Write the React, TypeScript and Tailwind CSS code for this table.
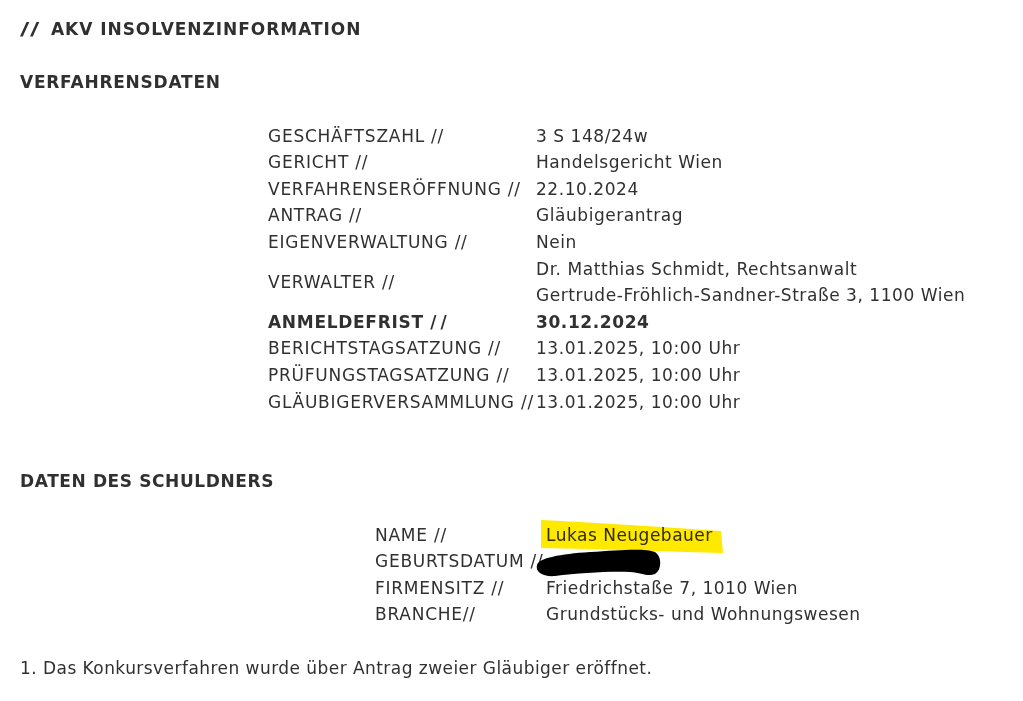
import React from "react";

const rows1: { label: React.ReactNode; key: string; value: React.ReactNode; bold?: boolean }[] = [
  { key: "a", label: "GESCHÄFTSZAHL //", value: "3 S 148/24w" },
  { key: "b", label: "GERICHT //", value: "Handelsgericht Wien" },
  { key: "c", label: "VERFAHRENSERÖFFNUNG //", value: "22.10.2024" },
  { key: "d", label: "ANTRAG //", value: "Gläubigerantrag" },
  { key: "e", label: "EIGENVERWALTUNG //", value: "Nein" },
  {
    key: "f",
    label: "VERWALTER //",
    value: (
      <>
        <div>Dr. Matthias Schmidt, Rechtsanwalt</div>
        <div>Gertrude-Fröhlich-Sandner-Straße 3, 1100 Wien</div>
      </>
    ),
  },
  {
    key: "g",
    label: (
      <>
        ANMELDEFRIST <span className="tracking-[4px]">//</span>
      </>
    ),
    value: "30.12.2024",
    bold: true,
  },
  { key: "h", label: "BERICHTSTAGSATZUNG //", value: "13.01.2025, 10:00 Uhr" },
  { key: "i", label: "PRÜFUNGSTAGSATZUNG //", value: "13.01.2025, 10:00 Uhr" },
  { key: "j", label: "GLÄUBIGERVERSAMMLUNG //", value: "13.01.2025, 10:00 Uhr" },
];

const rows2 = [
  { label: "NAME //", value: "Lukas Neugebauer" },
  { label: "GEBURTSDATUM //", value: "" },
  { label: "FIRMENSITZ //", value: "Friedrichstaße 7, 1010 Wien" },
  { label: "BRANCHE//", value: "Grundstücks- und Wohnungswesen" },
];

export default function App() {
  return (
    <div
      className="relative w-[1023px] h-[701px] overflow-hidden bg-white text-[#303030] text-[17px] leading-[26.6px] tracking-[0.6px] pl-[20px] pt-[15.7px]"
      style={{ fontFamily: '"DejaVu Sans", Verdana, sans-serif' }}
    >
      <h1 className="font-bold tracking-[0.95px] whitespace-nowrap">
        <span className="inline-block w-[31px]">
          <span className="inline-block origin-left scale-x-[1.5] tracking-[0.5px]">//</span>
        </span>
        AKV INSOLVENZINFORMATION
      </h1>
      <h2 className="font-bold tracking-[0.75px] mt-[26.4px]">VERFAHRENSDATEN</h2>
      <div className="mt-[27.4px] ml-[248px] grid grid-cols-[268px_auto] items-center">
        {rows1.map((r) => (
          <React.Fragment key={r.key}>
            <div
              className={
                r.bold
                  ? "font-bold whitespace-nowrap tracking-[0.7px]"
                  : "whitespace-nowrap tracking-[0.75px]"
              }
            >
              {r.label}
            </div>
            <div className={r.bold ? "font-bold whitespace-nowrap tracking-[0.6px]" : "whitespace-nowrap tracking-[0.55px]"}>
              {r.value}
            </div>
          </React.Fragment>
        ))}
      </div>
      <h2 className="font-bold tracking-[0.6px] mt-[52.4px]">DATEN DES SCHULDNERS</h2>
      <div className="mt-[27.4px] ml-[355px] grid grid-cols-[171px_auto] items-center">
        {rows2.map((r) => (
          <React.Fragment key={r.label}>
            <div className="whitespace-nowrap tracking-[0.75px]">{r.label}</div>
            <div className="whitespace-nowrap h-[26.6px] tracking-[0.5px]">{r.value}</div>
          </React.Fragment>
        ))}
      </div>
      <p className="mt-[26.6px] whitespace-nowrap tracking-[0.45px]">
        1. Das Konkursverfahren wurde über Antrag zweier Gläubiger eröffnet.
      </p>

      <svg className="absolute left-0 top-0 pointer-events-none mix-blend-multiply" width="1023" height="701">
        <path
          d="M541 520 C 600 523, 680 528, 721 531 L 723 553 C 680 552, 600 549, 541 548 Z"
          fill="#ffe900"
        />
      </svg>
      <svg className="absolute left-0 top-0 pointer-events-none" width="1023" height="701">
        <path
          d="M537 565 C 539 558, 560 554, 590 552 C 620 550, 645 548, 655 552 C 662 556, 662 570, 655 574 C 648 577, 642 573, 630 572 C 610 571, 580 573, 555 576 C 543 577, 535 572, 537 565 Z"
          fill="#000"
        />
      </svg>
    </div>
  );
}
